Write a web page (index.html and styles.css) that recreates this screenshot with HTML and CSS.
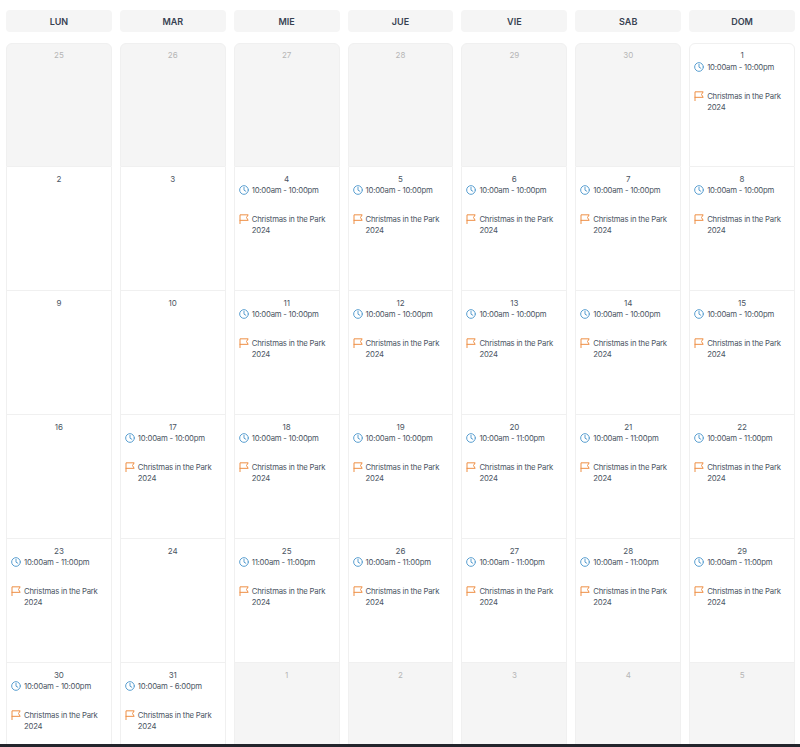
FILE: index.html
```html
<!DOCTYPE html>
<html lang="es">
<head>
<meta charset="utf-8">
<title>Calendario</title>
<link rel="stylesheet" href="styles.css">
</head>
<body>
<svg class="defs" width="0" height="0" aria-hidden="true">
  <symbol id="clock" viewBox="0 0 12 12"><circle cx="6" cy="6" r="5.2"/><path d="M6 2.8V6.2L8.2 7.5"/></symbol>
  <symbol id="flag" viewBox="0 0 12 12"><path d="M1.2 11.6V1H11L9 4.2L11 7.6H1.2"/></symbol>
</svg>
<main class="calendar" id="cal"></main>
<div class="taskbar"></div>
<script src="app.js"></script>
</body>
</html>
```
FILE: app.js
```js
var heads = ["LUN","MAR","MIE","JUE","VIE","SAB","DOM"];
var cells = [
 [25],[26],[27],[28],[29],[30],[1,"10:00am - 10:00pm"],
 [2,0],[3,0],[4,"10:00am - 10:00pm"],[5,"10:00am - 10:00pm"],[6,"10:00am - 10:00pm"],[7,"10:00am - 10:00pm"],[8,"10:00am - 10:00pm"],
 [9,0],[10,0],[11,"10:00am - 10:00pm"],[12,"10:00am - 10:00pm"],[13,"10:00am - 10:00pm"],[14,"10:00am - 10:00pm"],[15,"10:00am - 10:00pm"],
 [16,0],[17,"10:00am - 10:00pm"],[18,"10:00am - 10:00pm"],[19,"10:00am - 10:00pm"],[20,"10:00am - 11:00pm"],[21,"10:00am - 11:00pm"],[22,"10:00am - 11:00pm"],
 [23,"10:00am - 11:00pm"],[24,0],[25,"11:00am - 11:00pm"],[26,"10:00am - 11:00pm"],[27,"10:00am - 11:00pm"],[28,"10:00am - 11:00pm"],[29,"10:00am - 11:00pm"],
 [30,"10:00am - 10:00pm"],[31,"10:00am - 6:00pm"],[1],[2],[3],[4],[5]
];
var html = '<div class="heads">' + heads.map(function (h) {
  return '<div class="head">' + h + '</div>';
}).join("") + '</div><div class="grid">';
cells.forEach(function (c, i) {
  var outside = c.length === 1;
  var cls = "cell" + (outside ? " outside" : "");
  if (i < 7) cls += " top";
  html += '<div class="' + cls + '"><div class="num">' + c[0] + '</div>';
  if (c[1]) {
    html += '<div class="row time"><svg class="ico clock"><use href="#clock"/></svg><span>' + c[1] + '</span></div>' +
      '<div class="row event"><svg class="ico flag"><use href="#flag"/></svg><span>Christmas in the Park 2024</span></div>';
  }
  html += '</div>';
});
document.getElementById("cal").innerHTML = html + '</div>';
```
FILE: styles.css
```css
* { box-sizing: border-box; }
html, body { margin: 0; height: 747px; overflow: hidden; background: #fff; }
body { font-family: Inter, "Liberation Sans", sans-serif; color: #4b5563; display: flex; flex-direction: column; }
.defs { position: absolute; }
.calendar { flex: 1; min-height: 0; overflow: hidden; padding: 10px 5px 0 6px; }
.heads, .grid { display: grid; grid-template-columns: repeat(7, 1fr); column-gap: 8px; }
.head {
  height: 22px; background: #f5f5f5; border-radius: 4px;
  font-size: 9px; font-weight: 600; line-height: 23px; text-align: center;
  color: #374151;
}
.grid { margin-top: 11px; grid-auto-rows: 124px; }
.cell {
  border: 1px solid #f0f0f0; border-top-width: 0; background: #fff;
  padding: 6px 4px 0;
}
.cell.top { border-top-width: 1px; border-radius: 6px 6px 0 0; padding-top: 5px; }
.cell.top .num { margin-bottom: 1px; }
.cell.outside { background: #f5f5f5; }
.num { text-align: center; font-size: 8px; line-height: 12px; color: #4b5563; }
.outside .num { color: #b5b5b5; }
.row { display: flex; align-items: flex-start; gap: 3px; font-size: 7.75px; letter-spacing: -.22px; line-height: 12px; }
.time { margin-top: -1px; }
.event { margin-top: 17.5px; line-height: 11.7px; }
.ico { width: 10px; height: 10px; flex: none; fill: none; stroke-width: 1.2; stroke-linecap: round; stroke-linejoin: round; margin-top: 1px; }
.clock { stroke: #5a9fd0; }
.flag { stroke: #ee8f45; margin-top: .5px; }
.taskbar { flex: none; height: 3px; background: #23252c; }
```
